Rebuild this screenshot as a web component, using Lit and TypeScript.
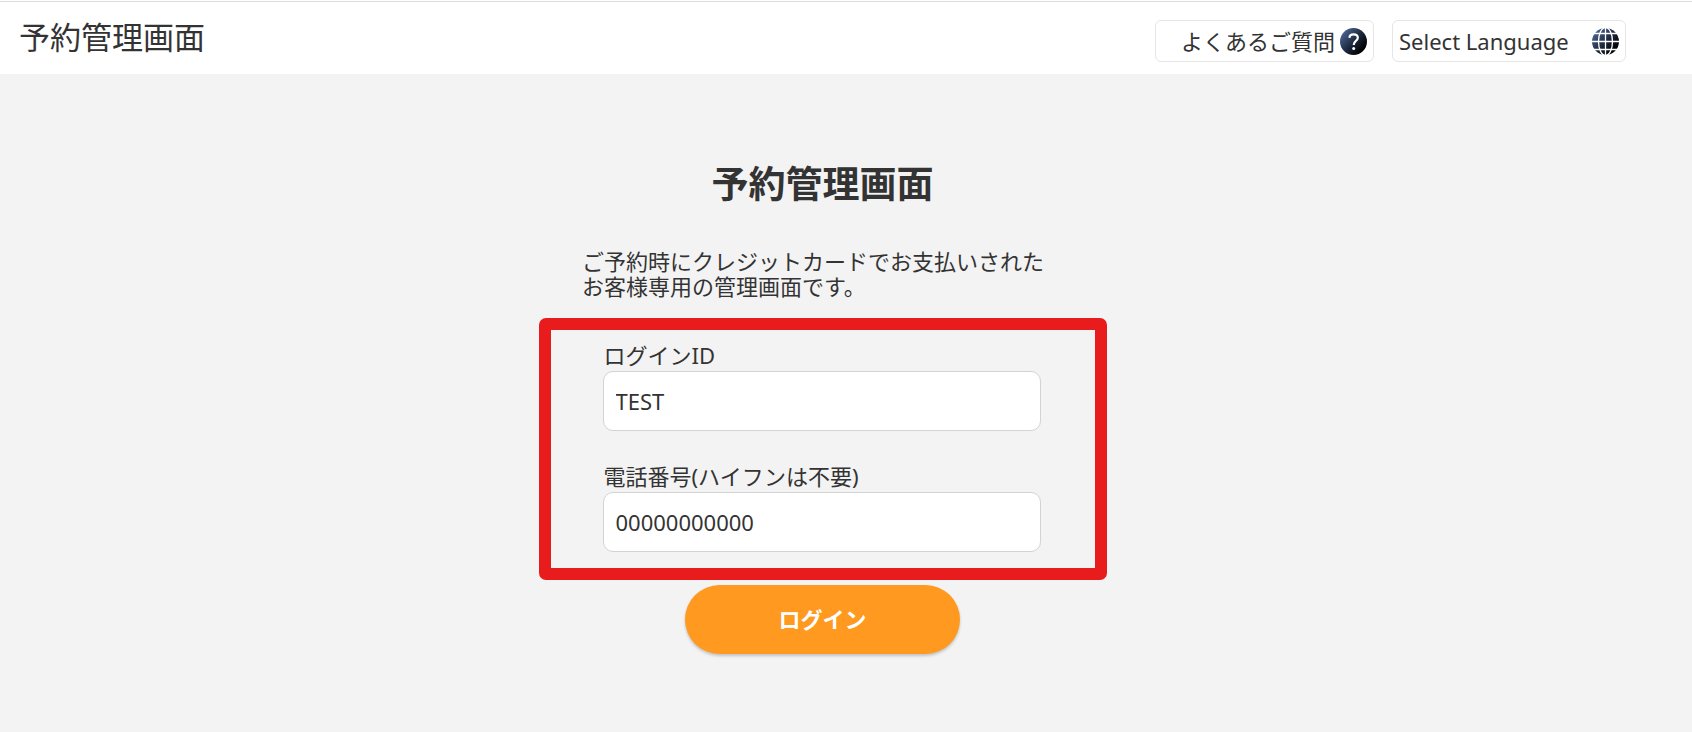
import { LitElement, html, css } from "lit";
import { customElement, property, state } from "lit/decorators.js";

@customElement("help-icon")
class HelpIcon extends LitElement {
  static styles = css`
    :host { display: block; width: 27px; height: 27px; flex: none; }
    svg { display: block; width: 100%; height: 100%; }
  `;
  render() {
    return html`<svg viewBox="0 0 27 27" aria-hidden="true">
      <defs>
        <linearGradient id="g" x1="0.1" y1="0.15" x2="0.9" y2="0.85">
          <stop offset="0" stop-color="#4a6391"></stop>
          <stop offset="0.5" stop-color="#1f2a40"></stop>
          <stop offset="0.9" stop-color="#020305"></stop>
        </linearGradient>
      </defs>
      <circle cx="13.5" cy="13.5" r="13.5" fill="url(#g)"></circle>
      <path d="M9.4 9.8C9.6 7.6 11.2 6.4 13.6 6.4C16.2 6.4 17.8 7.8 17.8 9.8C17.8 11.4 16.9 12.2 15.7 13.1C14.3 14.2 13.7 15 13.7 17"
        fill="none" stroke="#fff" stroke-width="2.2"></path>
      <circle cx="13.7" cy="20.4" r="1.5" fill="#fff"></circle>
    </svg>`;
  }
}

@customElement("globe-icon")
class GlobeIcon extends LitElement {
  static styles = css`
    :host { display: block; width: 27px; height: 27px; flex: none; }
    svg { display: block; width: 100%; height: 100%; }
  `;
  render() {
    return html`<svg viewBox="0 0 27 27" aria-hidden="true">
      <defs>
        <linearGradient id="g" x1="0.1" y1="0.15" x2="0.9" y2="0.85">
          <stop offset="0" stop-color="#4a6391"></stop>
          <stop offset="0.5" stop-color="#1f2a40"></stop>
          <stop offset="0.9" stop-color="#020305"></stop>
        </linearGradient>
      </defs>
      <circle cx="13.5" cy="13.5" r="13.5" fill="url(#g)"></circle>
      <g fill="none" stroke="#fff" stroke-width="1.3">
        <path d="M13.5 0V27M0 13.5H27M0 5.5H27M0 21.5H27"></path>
        <ellipse cx="13.5" cy="13.5" rx="7" ry="14"></ellipse>
      </g>
    </svg>`;
  }
}

@customElement("text-field")
class TextField extends LitElement {
  static styles = css`
    :host { display: block; }
    .label { display: block; line-height: 32px; padding-left: 1px; }
    .input {
      display: block;
      box-sizing: border-box;
      width: 100%;
      height: 60px;
      padding: 0 12px;
      border: 1px solid #d3d3d3;
      border-radius: 10px;
      background: #fff;
      color: inherit;
      font: inherit;
      outline: none;
    }
    .input:focus { border-color: #ff991f; }
  `;
  @property() label = "";
  @property() name = "";
  @property() type = "text";
  @property() value = "";
  private onInput(e: Event) {
    this.value = (e.target as HTMLInputElement).value;
  }
  render() {
    return html`
      <label class="label" for="field">${this.label}</label>
      <input class="input" id="field" name=${this.name} type=${this.type}
        .value=${this.value} @input=${this.onInput} />
    `;
  }
}

@customElement("app-root")
class AppRoot extends LitElement {
  static styles = css`
    :host {
      display: flex;
      flex-direction: column;
      box-sizing: border-box;
      min-height: 100vh;
      background: #f3f3f3;
      color: #333;
      font-family: "Noto Sans", "Noto Sans CJK JP", sans-serif;
      font-size: 22px;
      line-height: 25px;
    }
    .rule { height: 1px; background: #ddd; border-top: 1px solid #fff; }
    .header {
      display: flex;
      flex-wrap: wrap;
      align-items: flex-start;
      justify-content: space-between;
      gap: 8px;
      box-sizing: border-box;
      min-height: 72px;
      padding: 15px 66px 12px 19px;
      background: #fff;
    }
    .brand { font-size: 31px; line-height: 40px; }
    .tools { display: flex; gap: 18px; padding-top: 3px; }
    .tool {
      display: flex;
      align-items: center;
      box-sizing: border-box;
      height: 42px;
      border: 1px solid #e6e6e6;
      border-radius: 6px;
      padding: 0 6px;
      background: #fff;
      color: inherit;
      text-decoration: none;
    }
    .faq { padding-left: 25px; gap: 5px; }
    .select {
      appearance: none;
      width: 193px;
      height: 40px;
      padding: 0;
      border: 0;
      background: transparent;
      color: inherit;
      font: inherit;
      line-height: 32px;
    }
    .main {
      display: flex;
      flex-direction: column;
      align-items: center;
      padding: 84px 47px 40px 0;
    }
    .title { margin: 0; font-size: 37px; line-height: 52px; font-weight: 700; }
    .lead { width: 100%; max-width: 481px; margin: 39px 0 19px; }
    .form {
      display: flex;
      flex-direction: column;
      align-items: center;
      width: 100%;
      gap: 5px;
    }
    .frame {
      display: flex;
      flex-direction: column;
      gap: 29px;
      box-sizing: border-box;
      width: 100%;
      max-width: 568px;
      padding: 9px 54px 16px 52px;
      border: 12px solid #e81c1c;
      border-radius: 7px;
    }
    .submit {
      width: 275px;
      height: 69px;
      border: 0;
      border-radius: 35px;
      background: #ff991f;
      box-shadow: 0 2px 3px rgba(0, 0, 0, 0.2);
      color: #fff;
      font: inherit;
      font-weight: 700;
      cursor: pointer;
    }
  `;

  @state() private language = "";

  render() {
    return html`
      <div class="rule"></div>
      <header class="header">
        <div class="brand">予約管理画面</div>
        <nav class="tools">
          <a class="tool faq" href="#faq">よくあるご質問<help-icon></help-icon></a>
          <label class="tool">
            <select class="select" aria-label="Select Language"
              @change=${(e: Event) => (this.language = (e.target as HTMLSelectElement).value)}>
              <option value="">Select Language</option>
              <option value="ja">日本語</option>
              <option value="en">English</option>
            </select>
            <globe-icon></globe-icon>
          </label>
        </nav>
      </header>
      <main class="main">
        <h1 class="title">予約管理画面</h1>
        <p class="lead">ご予約時にクレジットカードでお支払いされた<br />お客様専用の管理画面です。</p>
        <form class="form" @submit=${(e: Event) => e.preventDefault()}>
          <div class="frame">
            <text-field label="ログインID" name="login" value="TEST"></text-field>
            <text-field label="電話番号(ハイフンは不要)" name="phone" type="tel" value="00000000000"></text-field>
          </div>
          <button class="submit" type="submit">ログイン</button>
        </form>
      </main>
    `;
  }
}
